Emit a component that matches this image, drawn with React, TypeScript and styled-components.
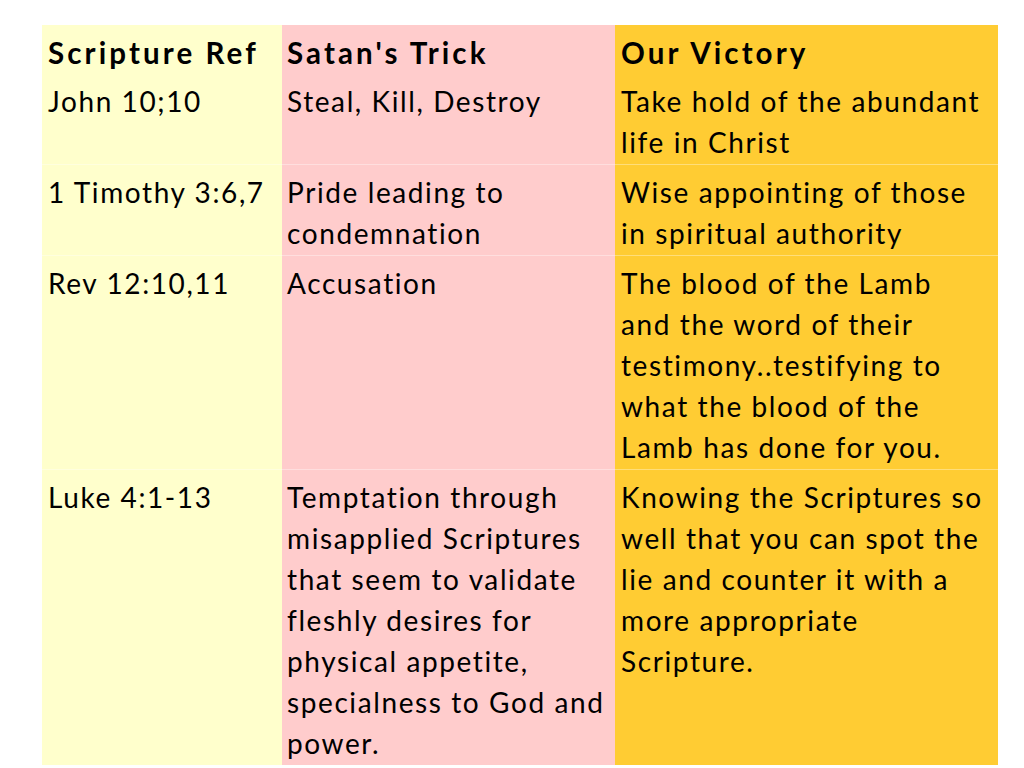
import React from 'react';
import styled, { createGlobalStyle } from 'styled-components';

const GlobalStyle = createGlobalStyle`
  html, body {
    margin: 0;
    padding: 0;
    background: #ffffff;
  }
  body {
    font-family: Lato, "Open Sans", sans-serif;
    color: #000000;
  }
`;

const colours = ['#ffffcc', '#ffcccc', '#ffcc33'];

const Page = styled.div`
  width: 1024px;
  height: 768px;
  padding: 25px 0 0 42px;
  box-sizing: border-box;
`;

const Table = styled.table`
  border-collapse: collapse;
  table-layout: fixed;
  width: 956px;
`;

const Row = styled.tr<{ $line?: boolean }>`
  border-top: ${(p) => (p.$line ? '1px solid rgba(255, 255, 255, 0.35)' : 'none')};
`;

const Cell = styled.td<{ $col: number; $head?: boolean }>`
  background: ${(p) => colours[p.$col]};
  vertical-align: top;
  padding: 7px 0 1px ${(p) => (p.$col === 1 ? 5 : 6)}px;
  font-size: ${(p) => (p.$head ? 29.5 : 28)}px;
  letter-spacing: ${(p) => (p.$head ? 3.1 : 1.6)}px;
  line-height: 41px;
  font-weight: ${(p) => (p.$head ? 700 : 400)};
  white-space: nowrap;
`;

const rows: string[][][] = [
  [['John 10;10'], ['Steal, Kill, Destroy'], ['Take hold of the abundant', 'life in Christ']],
  [['1 Timothy 3:6,7'], ['Pride leading to', 'condemnation'], ['Wise appointing of those', 'in spiritual authority']],
  [
    ['Rev 12:10,11'],
    ['Accusation'],
    [
      'The blood of the Lamb',
      'and the word of their',
      'testimony..testifying to',
      'what the blood of the',
      'Lamb has done for you.',
    ],
  ],
  [
    ['Luke 4:1-13'],
    [
      'Temptation through',
      'misapplied Scriptures',
      'that seem to validate',
      'fleshly desires for',
      'physical appetite,',
      'specialness to God and',
      'power.',
    ],
    [
      'Knowing the Scriptures so',
      'well that you can spot the',
      'lie and counter it with a',
      'more appropriate',
      'Scripture.',
    ],
  ],
];

const Lines = ({ lines }: { lines: string[] }) => (
  <>
    {lines.map((l, i) => (
      <React.Fragment key={i}>
        {i > 0 && <br />}
        {l}
      </React.Fragment>
    ))}
  </>
);

const App = () => {
  return (
    <Page>
      <GlobalStyle />
      <Table>
        <colgroup>
          <col style={{ width: 240 }} />
          <col style={{ width: 333 }} />
          <col style={{ width: 383 }} />
        </colgroup>
        <tbody>
          <Row>
            <Cell $col={0} $head>Scripture Ref</Cell>
            <Cell $col={1} $head>Satan's Trick</Cell>
            <Cell $col={2} $head>Our Victory</Cell>
          </Row>
          {rows.map((r, i) => (
            <Row key={i} $line={i > 0}>
              {r.map((c, j) => (
                <Cell key={j} $col={j}>
                  <Lines lines={c} />
                </Cell>
              ))}
            </Row>
          ))}
        </tbody>
      </Table>
    </Page>
  );
};

export default App;
